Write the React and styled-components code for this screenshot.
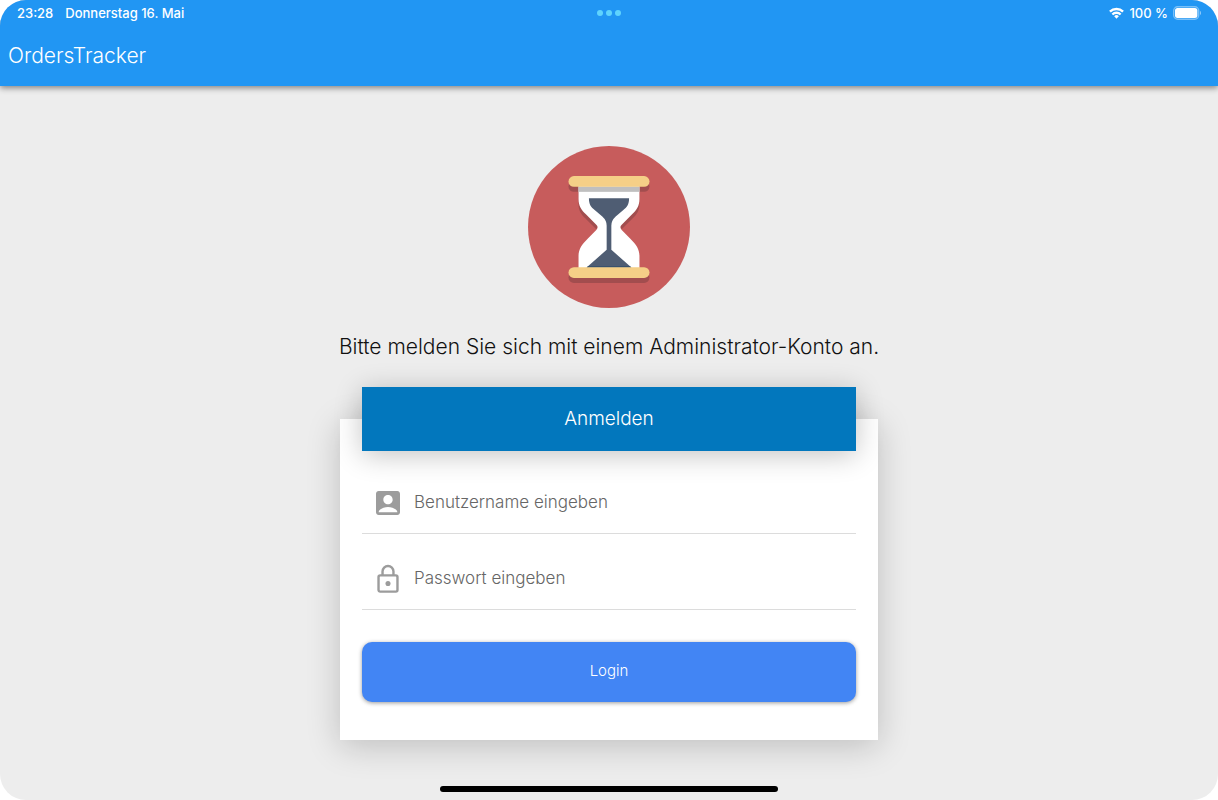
import React from "react";
import styled, { createGlobalStyle } from "styled-components";

const GlobalStyle = createGlobalStyle`
  * { box-sizing: border-box; }
  body {
    margin: 0;
    background: #fff;
    font-family: Inter, "Liberation Sans", sans-serif;
  }
`;

const Screen = styled.div`
  display: flex;
  flex-direction: column;
  min-height: 100vh;
  border-radius: 26px;
  overflow: hidden;
  background: #ededed;
`;

const Header = styled.header`
  height: 86px;
  background: #2196f3;
  color: #fff;
  box-shadow: 0 2px 6px rgba(0, 0, 0, 0.45);
`;

const StatusBar = styled.div`
  display: grid;
  grid-template-columns: 1fr auto 1fr;
  align-items: center;
  height: 26px;
  padding: 0 17px;
  font-size: 13px;
  font-weight: 500;
`;

const StatusLeft = styled.div`
  display: flex;
  gap: 12px;
`;

const StatusRight = styled.div`
  display: flex;
  align-items: center;
  justify-content: flex-end;
  gap: 5px;
`;

const Dots = styled.div`
  display: flex;
  gap: 3px;
`;

const Dot = styled.span`
  width: 6px;
  height: 6px;
  border-radius: 50%;
  background: #5fd3fd;
`;

const Title = styled.h1`
  margin: 0;
  padding: 15px 8px;
  font-size: 21px;
  line-height: 30px;
  font-weight: 300;
`;

const Main = styled.main`
  flex: 1;
  display: flex;
  flex-direction: column;
  align-items: center;
  padding: 60px 20px 45px;
`;

const Logo = styled.svg`
  width: 162px;
  height: 162px;
`;

const Message = styled.p`
  margin: 24px 0 25px;
  color: #111;
  font-size: 21px;
  line-height: 30px;
  font-weight: 300;
  text-align: center;
`;

const Card = styled.form`
  width: 100%;
  max-width: 538px;
  margin-top: 32px;
  padding: 0 22px 38px;
  background: #fff;
  box-shadow: 0 6px 32px rgba(0, 0, 0, 0.2);
`;

const Banner = styled.h2`
  margin: -32px 0 7px;
  background: #0277bd;
  color: #fff;
  font-size: 19px;
  line-height: 64px;
  font-weight: 300;
  text-align: center;
  box-shadow: 0 4px 28px rgba(0, 0, 0, 0.24);
`;

const Field = styled.label`
  display: flex;
  align-items: center;
  gap: 10px;
  height: 76px;
  padding: 14px 10px 0;
  border-bottom: 1px solid #dcdcdc;
`;

const FieldIcon = styled.svg`
  flex: none;
  width: 32px;
  height: 32px;
  fill: #9c9c9c;
`;

const Input = styled.input`
  flex: 1;
  min-width: 0;
  padding: 0 0 2px;
  border: 0;
  outline: 0;
  background: transparent;
  color: #222;
  font: 300 17px/24px Inter, "Liberation Sans", sans-serif;

  &::placeholder {
    color: #666;
    opacity: 1;
  }
`;

const LoginButton = styled.button`
  display: block;
  width: 100%;
  height: 60px;
  margin-top: 32px;
  padding: 0 0 2px;
  border: 0;
  border-radius: 10px;
  background: #4285f4;
  color: #fff;
  font: 300 15px/20px Inter, "Liberation Sans", sans-serif;
  box-shadow: 0 1px 4px rgba(0, 0, 0, 0.4);
`;

const HomeIndicator = styled.div`
  align-self: center;
  width: 50%;
  max-width: 338px;
  height: 6px;
  margin-bottom: 8px;
  border-radius: 3px;
  background: #000;
`;

function Wifi() {
  return (
    <svg width="15" height="12" viewBox="0 0 16 12" fill="none" stroke="#fff" strokeWidth="2.5">
      <path d="M1 4.6a9.9 9.9 0 0 1 14 0" />
      <path d="M3.6 7.6a6.2 6.2 0 0 1 8.8 0" />
      <path d="M8 12 5.5 9.5a3.5 3.5 0 0 1 5 0z" fill="#fff" stroke="none" />
    </svg>
  );
}

function Battery() {
  return (
    <svg width="28" height="14" viewBox="0 0 28 14">
      <rect x="0.7" y="0.7" width="25" height="12.6" rx="4" fill="none" stroke="#fff" strokeOpacity="0.4" strokeWidth="1.4" />
      <rect x="2" y="2" width="22.4" height="10" rx="2.5" fill="#fff" />
      <path d="M27 4.8c1.3.8 1.3 3.5 0 4.3z" fill="#fff" fillOpacity="0.5" />
    </svg>
  );
}

function Hourglass() {
  return (
    <Logo viewBox="25 18 484 484" role="img" aria-label="OrdersTracker">
      <circle cx="267" cy="260" r="242" fill="#c75c5c" />
      <g fill="#a24d4e">
        <rect x="146" y="123" width="242" height="32" rx="16" />
        <rect x="146" y="395" width="242" height="32" rx="16" />
        <path d="M176 155V192C176 211 183 221 196 234L229 267L238 250ZM358 155V192C358 211 351 221 338 234L305 267L296 250Z" />
      </g>
      <path
        fill="#fff"
        d="M176 130H358V176C358 197 349 210 336 222L305 253Q297 261 305 269L330 294C348 312 358 325 358 347V388H176V347C176 325 186 312 204 294L229 269Q237 261 229 253L198 222C185 210 176 197 176 176Z"
      />
      <rect x="176" y="139" width="182" height="16" fill="#bfbfbf" />
      <path
        fill="#4f5d73"
        d="M207 174H327C327 193 321 200 309 210L287 229Q274 241 274 256V328L334 381H200L260 328V256Q260 241 247 229L225 210C213 200 207 193 207 174Z"
      />
      <path fill="#244669" d="M203 378H331L334 382H200Z" />
      <rect x="146" y="108" width="242" height="32" rx="16" fill="#f5cf87" />
      <rect x="146" y="380" width="242" height="32" rx="16" fill="#f5cf87" />
    </Logo>
  );
}

export default function App() {
  return (
    <>
      <GlobalStyle />
      <Screen>
        <Header>
          <StatusBar>
            <StatusLeft>
              <span>23:28</span>
              <span>Donnerstag 16. Mai</span>
            </StatusLeft>
            <Dots>
              <Dot />
              <Dot />
              <Dot />
            </Dots>
            <StatusRight>
              <Wifi />
              <span>100 %</span>
              <Battery />
            </StatusRight>
          </StatusBar>
          <Title>OrdersTracker</Title>
        </Header>
        <Main>
          <Hourglass />
          <Message>Bitte melden Sie sich mit einem Administrator-Konto an.</Message>
          <Card onSubmit={(event) => event.preventDefault()}>
            <Banner>Anmelden</Banner>
            <Field>
              <FieldIcon viewBox="0 0 24 24" aria-hidden="true">
                <path d="M19 3H5c-1.1 0-2 .9-2 2v14c0 1.1.9 2 2 2h14c1.1 0 2-.9 2-2V5c0-1.1-.9-2-2-2zm-7 3c1.93 0 3.5 1.57 3.5 3.5S13.93 13 12 13s-3.5-1.57-3.5-3.5S10.07 6 12 6zm7 13H5v-.23c0-.62.28-1.2.76-1.58C7.47 15.82 9.64 15 12 15s4.53.82 6.24 2.19c.48.38.76.97.76 1.58V19z" />
              </FieldIcon>
              <Input type="text" placeholder="Benutzername eingeben" aria-label="Benutzername" />
            </Field>
            <Field>
              <FieldIcon viewBox="0 0 24 24" aria-hidden="true">
                <rect x="4.9" y="9.3" width="14.2" height="12.2" rx="1.2" fill="none" stroke="#9c9c9c" strokeWidth="1.8" />
                <path d="M7.900 9V6.300a4.100 4.100 0 0 1 8.200 0V9" fill="none" stroke="#9c9c9c" strokeWidth="1.8" />
                <circle cx="12" cy="15.400" r="1.900" />
              </FieldIcon>
              <Input type="password" placeholder="Passwort eingeben" aria-label="Passwort" />
            </Field>
            <LoginButton type="submit">Login</LoginButton>
          </Card>
        </Main>
        <HomeIndicator />
      </Screen>
    </>
  );
}
